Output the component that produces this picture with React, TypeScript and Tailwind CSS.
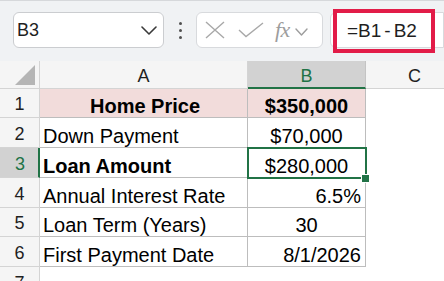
import React from "react";

function Chevron({ color, w = 14, h = 7, sw = 1.6 }: { color: string; w?: number; h?: number; sw?: number }) {
  return (
    <svg width={w + 2} height={h + 2} viewBox={`-1 -1 ${w + 2} ${h + 2}`} fill="none">
      <path d={`M0 0 L${w / 2} ${h} L${w} 0`} stroke={color} strokeWidth={sw} strokeLinecap="round" strokeLinejoin="round" />
    </svg>
  );
}

type Row = {
  n: number;
  a: string;
  b: string;
  aBold?: boolean;
  bBold?: boolean;
  bAlign: "center" | "right";
  pink?: boolean;
  sel?: boolean;
  h: string;
};

const rows: Row[] = [
  { n: 1, a: "Home Price", b: "$350,000", aBold: true, bBold: true, bAlign: "center", pink: true, h: "h-[29px]" },
  { n: 2, a: "Down Payment", b: "$70,000", bAlign: "center", h: "h-[30px]" },
  { n: 3, a: "Loan Amount", b: "$280,000", aBold: true, bAlign: "center", sel: true, h: "h-[30px]" },
  { n: 4, a: "Annual Interest Rate", b: "6.5%", bAlign: "right", h: "h-[30px]" },
  { n: 5, a: "Loan Term (Years)", b: "30", bAlign: "center", h: "h-[29px]" },
  { n: 6, a: "First Payment Date", b: "8/1/2026", bAlign: "right", h: "h-[30px]" },
];

export default function App() {
  return (
    <div className="w-[444px] h-[281px] overflow-hidden bg-white font-['Liberation_Sans',sans-serif] text-black">
      {/* Formula bar */}
      <div className="h-[61px] bg-[#f0f2f4] border-t border-[#d6d8db] flex items-start pt-[11px] pl-[13px] relative">
        <div className="w-[151px] h-[36px] bg-white border border-[#cbcdd0] rounded-[6px] flex items-center justify-between pl-[3px] pr-[6px]">
          <span className="text-[18px] leading-none text-[#1f1f1f]">B3</span>
          <Chevron color="#3a3a3a" />
        </div>
        <div className="w-[32px] h-[36px] flex flex-col items-center justify-center gap-[4px]">
          <div className="w-[3px] h-[3px] rounded-full bg-[#505050]" />
          <div className="w-[3px] h-[3px] rounded-full bg-[#505050]" />
          <div className="w-[3px] h-[3px] rounded-full bg-[#505050]" />
        </div>
        <div className="w-[127px] h-[36px] bg-white border border-[#d8dadd] rounded-[6px] flex items-center pl-[8px]">
          <svg width="20" height="18" viewBox="0 0 20 18" fill="none">
            <path d="M1 1 L19 17 M19 1 L1 17" stroke="#a8a8a8" strokeWidth="1.4" />
          </svg>
          <svg width="26" height="16" viewBox="0 0 26 16" fill="none" className="ml-[13px]">
            <path d="M1 8 L8 14.5 L25 1" stroke="#a8a8a8" strokeWidth="1.4" />
          </svg>
          <span className="ml-[11px] font-['Liberation_Serif',serif] italic text-[22px] leading-none text-[#9d9d9d] tracking-[-0.5px]">fx</span>
          <span className="ml-[5px] mt-[4px] flex">
            <Chevron color="#9d9d9d" w={11} h={6} sw={1.4} />
          </span>
        </div>
        <div className="ml-[7px] flex-1 h-[36px] bg-white border border-[#d8dadd] rounded-l-[6px] flex items-center pl-[16px]">
          <span className="text-[19px] leading-none text-[#1f1f1f]">
            =B1<span className="mx-[3px]">-</span>B2
          </span>
        </div>
        <div className="absolute left-[333px] top-[8px] w-[102px] h-[44px] border-[4px] border-[#e21c48]" />
      </div>

      {/* Sheet */}
      <div className="grid grid-cols-[40px_208px_118px_1fr]">
        {/* header row */}
        <div className="h-[28px] bg-[#f5f5f5] border-r border-b border-[#d4d4d4] relative">
          <svg width="20" height="20" viewBox="0 0 20 20" className="absolute right-[4px] bottom-[3px]">
            <polygon points="20,0 20,20 0,20" fill="#b5b5b5" />
          </svg>
        </div>
        <div className="h-[28px] bg-[#f5f5f5] border-r border-b border-[#d4d4d4] flex items-center justify-center pt-[2px] text-[18px] leading-none text-[#1f1f1f]">
          A
        </div>
        <div className="h-[28px] bg-[#d2d2d2] border-r border-[#c4c4c4] border-b-2 border-b-[#217346] flex items-center justify-center pt-[3px] text-[18px] leading-none text-[#217346]">
          B
        </div>
        <div className="h-[28px] bg-[#f5f5f5] border-b border-[#d4d4d4] flex items-center justify-start pl-[42px] pt-[2px] text-[18px] leading-none text-[#1f1f1f]">
          C
        </div>

        {rows.map((r) => (
          <React.Fragment key={r.n}>
            <div
              className={
                r.sel
                  ? `${r.h} bg-[#d2d2d2] border-r-2 border-r-[#217346] border-b border-b-[#d4d4d4] flex items-center justify-center pl-[2px] pt-[2px] text-[18px] leading-none text-[#217346]`
                  : `${r.h} bg-[#f5f5f5] border-r border-b border-[#d4d4d4] flex items-center justify-center pt-[2px] text-[18px] leading-none text-[#1f1f1f]`
              }
            >
              {r.n}
            </div>
            <div
              className={`${r.h} ${r.pink ? "bg-[#f2dcdb]" : "bg-white"} border-r border-b border-[#bdbdbd] flex items-end pl-[3px] text-[20px] leading-[22px] whitespace-nowrap overflow-hidden ${
                r.pink ? "justify-center" : "justify-start"
              } ${r.aBold ? "font-bold" : ""}`}
            >
              {r.a}
            </div>
            <div
              className={`${r.h} ${r.sel ? "relative z-10" : ""} ${r.pink ? "bg-[#f2dcdb]" : "bg-white"} border-r border-b border-[#bdbdbd] flex items-end text-[20px] leading-[22px] whitespace-nowrap ${
                r.bAlign === "right" ? "justify-end pr-[4px]" : "justify-center"
              } ${r.bBold ? "font-bold" : ""}`}
            >
              {r.b}
              {r.sel && (
                <>
                  <div className="absolute left-[-1px] top-[-1px] right-[-2px] bottom-[-2px] border-2 border-[#217346] pointer-events-none" />
                  <div className="absolute right-[-5px] bottom-[-6px] w-[9px] h-[9px] bg-[#217346] border border-white" />
                </>
              )}
            </div>
            <div className={`${r.h} bg-white`} />
          </React.Fragment>
        ))}

        {/* row 7 */}
        <div className="h-[30px] bg-[#f5f5f5] border-r border-[#d4d4d4] flex items-center justify-center pt-[2px] text-[18px] leading-none text-[#1f1f1f]">
          7
        </div>
        <div className="h-[30px] bg-white" />
        <div className="h-[30px] bg-white" />
        <div className="h-[30px] bg-white" />
      </div>
    </div>
  );
}
